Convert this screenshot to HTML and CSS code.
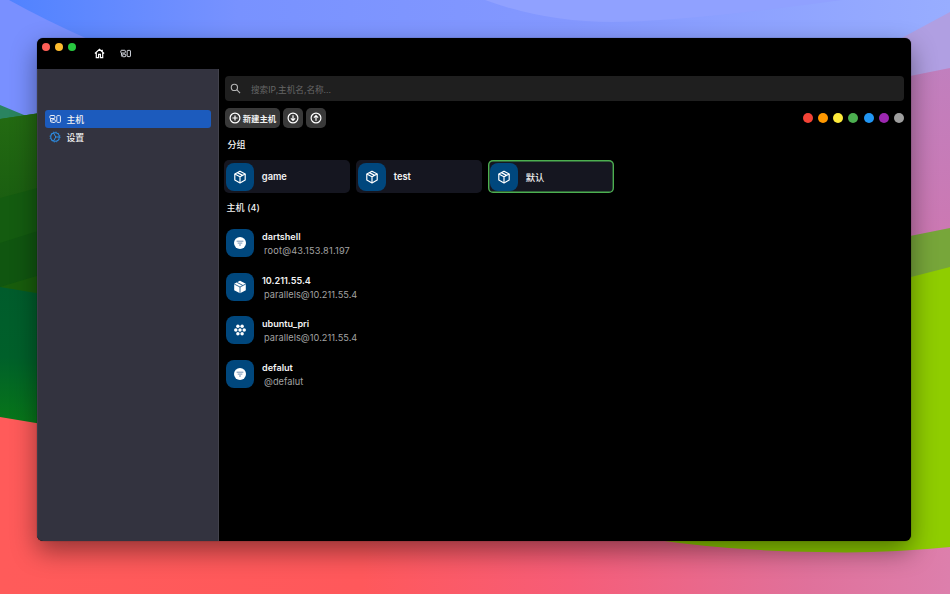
FILE: index.html
```
<!DOCTYPE html>
<html lang="zh-CN">

<head>
    <meta charset="UTF-8">
    <meta name="viewport" content="width=device-width, initial-scale=1.0">
    <title>主机</title>
    <link rel="stylesheet" href="styles.css">
</head>

<body>
    <!-- 壁纸 -->
    <svg class="wallpaper" viewBox="0 0 950 594" preserveAspectRatio="none">
        <defs>
            <linearGradient id="sky">
                <stop offset="0" stop-color="#4f82ff" />
                <stop offset=".25" stop-color="#7892ff" />
                <stop offset=".6" stop-color="#8498ff" />
                <stop offset="1" stop-color="#98adff" />
            </linearGradient>
            <linearGradient id="ground">
                <stop offset="0" stop-color="#ff5b5a" />
                <stop offset=".38" stop-color="#ff585b" />
                <stop offset=".6" stop-color="#f65d78" />
                <stop offset=".85" stop-color="#e0719b" />
                <stop offset="1" stop-color="#dd7fac" />
            </linearGradient>
            <linearGradient id="forest" x2="0" y2="1">
                <stop offset="0" stop-color="#005c2c" />
                <stop offset=".5" stop-color="#00602a" />
                <stop offset="1" stop-color="#087818" />
            </linearGradient>
            <linearGradient id="hill" x2="0" y2="1">
                <stop offset="0" stop-color="#246b12" />
                <stop offset="1" stop-color="#10510f" />
            </linearGradient>
            <linearGradient id="pink" x2="0" y2="1">
                <stop offset="0" stop-color="#c17fbe" />
                <stop offset="1" stop-color="#cc78b2" />
            </linearGradient>
        </defs>
        <rect width="950" height="594" fill="url(#sky)" />
        <path d="M0 0H9Q45 20 90 40V130H0z" fill="#7990ff" />
        <path d="M485 0Q545 22 612 22Q680 22 842 0z" fill="#90a1ff" />
        <path d="M950 12L898 40V90H950z" fill="#b09fe2" />
        <path d="M900 78L950 68V240H900z" fill="url(#pink)" />
        <path d="M0 400H950V594H0z" fill="url(#ground)" />
        <path d="M0 105L24 115L60 130H0z" fill="#2a8460" />
        <path d="M0 119L60 110V200H0z" fill="#23690f" />
        <path d="M0 119L60 110V300H0z" fill="url(#hill)" />
        <path d="M0 198L60 182V300H0z" fill="#145c10" />
        <path d="M0 243L60 224V300H0z" fill="#105610" />
        <path d="M0 287L60 269V310H0z" fill="#185d0c" />
        <path d="M0 287L60 297V427L0 417z" fill="url(#forest)" />
        <path d="M900 238L950 228V290H900z" fill="#77a63a" />
        <path d="M880 285L950 267V547Q880 554 818 552Q730 551 650 539z" fill="#8fcd00" />
    </svg>

    <div class="window">
        <div class="titlebar">
            <div class="lights">
                <span class="light close"></span>
                <span class="light min"></span>
                <span class="light max"></span>
            </div>
            <svg class="tab-icon" viewBox="0 0 24 24" fill="none" stroke="#fff" stroke-width="2.6">
                <path d="M2 12L12 3L22 12M5 10V21H10V14H14V21H19V10M18 8V4" />
            </svg>
            <svg class="tab-icon" viewBox="0 0 12 12">
                <use href="#devices" />
            </svg>
        </div>

        <div class="main">
            <div class="sidebar">
                <div class="menu active">
                    <svg class="menu-icon" viewBox="0 0 12 12">
                        <g id="devices" fill="none" stroke="#e8ecf5" stroke-width="1">
                            <rect x=".9" y="2.5" width="4.9" height="3" rx=".8" />
                            <path d="M1.6 5.5V8.2Q1.6 9.4 2.6 9.4" />
                            <rect x="2.9" y="6.7" width="3.4" height="2.8" rx=".8" />
                            <rect x="7.8" y="2.6" width="3.6" height="6.8" rx=".7" />
                        </g>
                    </svg>
                    <span>主机</span>
                </div>
                <div class="menu">
                    <svg class="menu-icon" viewBox="0 0 12 12" fill="none" stroke="#2d8ee6">
                        <circle cx="6" cy="6" r="4.3" stroke-width="1.1" />
                        <circle cx="6" cy="6" r="5" stroke-dasharray="1.1 1.52" stroke-width=".9" />
                        <path d="M4.5 2L6.8 6L4.5 10M6.8 6H10.3" />
                    </svg>
                    <span>设置</span>
                </div>
            </div>

            <div class="content">
                <div class="search">
                    <svg class="search-icon" viewBox="0 0 12 12" fill="none" stroke="#b5b5b5" stroke-width="1.2">
                        <circle cx="4.8" cy="4.8" r="3.4" />
                        <path d="M7.3 7.3L11 11" />
                    </svg>
                    <span>搜索IP,主机名,名称...</span>
                </div>

                <div class="toolbar">
                    <div class="btn btn-new">
                        <svg class="btn-icon" viewBox="0 0 12 12">
                            <circle cx="6" cy="6" r="4.9" />
                            <path d="M6 3.4V8.6M3.4 6H8.6" />
                        </svg>
                        <span>新建主机</span>
                    </div>
                    <div class="btn">
                        <svg class="btn-icon" viewBox="0 0 12 12">
                            <circle cx="6" cy="6" r="4.9" />
                            <path d="M6 3.3V8.3M3.9 6.3L6 8.4L8.1 6.3" />
                        </svg>
                    </div>
                    <div class="btn">
                        <svg class="btn-icon" viewBox="0 0 12 12">
                            <circle cx="6" cy="6" r="4.9" />
                            <path d="M6 8.7V3.7M3.9 5.7L6 3.6L8.1 5.7" />
                        </svg>
                    </div>
                    <div class="colors">
                        <span class="dot red"></span>
                        <span class="dot orange"></span>
                        <span class="dot yellow"></span>
                        <span class="dot green"></span>
                        <span class="dot blue"></span>
                        <span class="dot purple"></span>
                        <span class="dot grey"></span>
                    </div>
                </div>

                <div class="title">分组</div>
                <div class="groups">
                    <div class="group">
                        <div class="tile">
                            <svg class="tile-icon" viewBox="0 0 14 14">
                                <g id="box" fill="none" stroke="#fff" stroke-width="1.2" stroke-linejoin="round">
                                    <path d="M7 1.2L12.2 4V10L7 12.9L1.8 10V4z" />
                                    <path d="M1.8 4L7 6.8L12.2 4M7 6.8V12.9M4.4 2.6L9.6 5.4" />
                                </g>
                            </svg>
                        </div>
                        <span>game</span>
                    </div>
                    <div class="group">
                        <div class="tile">
                            <svg class="tile-icon" viewBox="0 0 14 14">
                                <use href="#box" />
                            </svg>
                        </div>
                        <span>test</span>
                    </div>
                    <div class="group selected">
                        <div class="tile">
                            <svg class="tile-icon" viewBox="0 0 14 14">
                                <use href="#box" />
                            </svg>
                        </div>
                        <span class="cn">默认</span>
                    </div>
                </div>

                <div class="title hosts-title">主机 (4)</div>
                <div class="hosts">
                    <div class="host">
                        <div class="tile">
                            <svg class="tile-icon" viewBox="0 0 14 14">
                                <g id="filter">
                                    <circle cx="7" cy="7" r="6" fill="#fff" />
                                    <path d="M3.6 5.2H10.4M4.7 7.1H9.3M6 9H8" stroke="#6487ab" stroke-width=".9" />
                                </g>
                            </svg>
                        </div>
                        <div>
                            <div class="name">dartshell</div>
                            <div class="addr root">root@43.153.81.197</div>
                        </div>
                    </div>
                    <div class="host">
                        <div class="tile">
                            <svg class="tile-icon" viewBox="0 0 14 14">
                                <path d="M7 .8L12.8 3.8V10.2L7 13.3L1.2 10.2V3.8z" fill="#fff" />
                                <path d="M1.2 4L7 7L12.8 4M7 7V13.3M4 2.4L9.8 5.4" fill="none" stroke="#00477d" stroke-width=".8" />
                            </svg>
                        </div>
                        <div>
                            <div class="name">10.211.55.4</div>
                            <div class="addr">parallels@10.211.55.4</div>
                        </div>
                    </div>
                    <div class="host">
                        <div class="tile">
                            <svg class="tile-icon" viewBox="0 0 14 14" fill="#fff">
                                <circle cx="7" cy="7" r="1.75" />
                                <circle cx="2.8" cy="7" r="1.75" />
                                <circle cx="11.2" cy="7" r="1.75" />
                                <circle cx="4.9" cy="3.3" r="1.75" />
                                <circle cx="9.1" cy="3.3" r="1.75" />
                                <circle cx="4.9" cy="10.7" r="1.75" />
                                <circle cx="9.1" cy="10.7" r="1.75" />
                            </svg>
                        </div>
                        <div>
                            <div class="name">ubuntu_pri</div>
                            <div class="addr">parallels@10.211.55.4</div>
                        </div>
                    </div>
                    <div class="host">
                        <div class="tile">
                            <svg class="tile-icon" viewBox="0 0 14 14">
                                <use href="#filter" />
                            </svg>
                        </div>
                        <div>
                            <div class="name">defalut</div>
                            <div class="addr">@defalut</div>
                        </div>
                    </div>
                </div>
            </div>
        </div>
    </div>
</body>

</html>
```
FILE: styles.css
```
* {
    box-sizing: border-box;
}

body {
    margin: 0;
    height: 594px;
    overflow: hidden;
    padding: 38px 39px 53px 37px;
    font-family: Inter, "Noto Sans CJK SC", sans-serif;
    font-size: 9px;
    color: #f2f2f2;
}

svg {
    display: block;
    flex: none;
}

.wallpaper {
    position: absolute;
    left: 0;
    top: 0;
    width: 950px;
    height: 594px;
    z-index: -1;
}

.window {
    height: 503px;
    display: flex;
    flex-direction: column;
    border-radius: 6px;
    overflow: hidden;
    background-color: #000;
    box-shadow: 0 0 1px rgba(0, 0, 0, 0.7), 0 10px 26px rgba(0, 0, 0, 0.42);
}

.titlebar {
    height: 31px;
    display: flex;
    padding-left: 5.3px;
}

.lights {
    display: flex;
    gap: 5px;
    padding-top: 4.5px;
    margin-right: 18px;
}

.light {
    width: 8px;
    height: 8px;
    border-radius: 50%;
}

.close {
    background-color: #ff5f57;
}

.min {
    background-color: #febc2e;
}

.max {
    background-color: #28c840;
}

.tab-icon {
    width: 11px;
    height: 11px;
    margin: 10px 15px 0 0;
}

.main {
    flex: 1;
    display: flex;
}

.sidebar {
    width: 181.5px;
    padding: 41.4px 8px 0;
    background-color: #33333f;
    border-left: 1px solid #3c3c48;
    border-right: 1px solid #42424c;
}

.menu {
    height: 18px;
    display: flex;
    align-items: center;
    gap: 5px;
    padding-left: 4.4px;
    border-radius: 3px;
    font-weight: 500;
    font-size: 8.8px;
    margin-right: -1px;
    margin-left: -1px;
}

.menu.active {
    background-color: #1c5bbd;
}

.menu-icon {
    width: 12px;
    height: 12px;
}

.content {
    flex: 1;
    padding: 7px 7.5px 0 6.5px;
}

.search {
    height: 25px;
    display: flex;
    align-items: center;
    gap: 10px;
    padding-left: 5px;
    border-radius: 4px;
    background-color: #1f1f1f;
    color: #666;
    font-size: 8.6px;
}

.search-icon {
    width: 11px;
    height: 11px;
}

.toolbar {
    display: flex;
    align-items: center;
    gap: 3.2px;
    margin: 7px -0.4px 0 0;
}

.btn {
    width: 20px;
    height: 20px;
    display: flex;
    align-items: center;
    justify-content: center;
    border-radius: 5px;
    background-color: #393939;
}

.btn-new {
    width: 55px;
    gap: 2px;
    font-size: 8.4px;
    font-weight: 700;
    white-space: nowrap;
}

.btn-icon {
    width: 12px;
    height: 12px;
    fill: none;
    stroke: #fff;
    stroke-width: 1.2;
}

.colors {
    display: flex;
    gap: 5.2px;
    margin-left: auto;
}

.dot {
    width: 10px;
    height: 10px;
    border-radius: 50%;
}

.red {
    background-color: #f44336;
}

.orange {
    background-color: #ff9800;
}

.yellow {
    background-color: #ffeb3b;
}

.green {
    background-color: #4caf50;
}

.blue {
    background-color: #2196f3;
}

.purple {
    background-color: #9c27b0;
}

.grey {
    background-color: #9e9e9e;
}

.title {
    margin: 10px 0 0 2.5px;
    line-height: 14px;
    font-weight: 500;
}

.groups {
    display: flex;
    gap: 6px;
    margin: 8px 0 0 -1.2px;
}

.group {
    width: 126px;
    height: 33px;
    display: flex;
    align-items: center;
    gap: 8px;
    padding-left: 2px;
    border-radius: 5px;
    background-color: #151620;
    font-weight: 600;
    font-size: 9.3px;
}

.group.selected {
    box-shadow: inset 0 0 0 1.4px #4caf50;
}

.group .cn {
    font-weight: 500;
}

.tile {
    width: 28px;
    height: 28px;
    display: flex;
    align-items: center;
    justify-content: center;
    border-radius: 8px;
    background-color: #00477d;
}

.tile-icon {
    width: 14px;
    height: 14px;
}

.hosts-title {
    margin: 8px 0 0 1.5px;
    letter-spacing: 0.1px;
}

.hosts {
    margin: 14.4px 0 0 1px;
}

.host {
    height: 28px;
    display: flex;
    gap: 8px;
    margin-bottom: 15.5px;
}

.name {
    margin-top: 1px;
    line-height: 14px;
    font-size: 9.1px;
    font-weight: 600;
}

.addr {
    margin-left: 2px;
    line-height: 14px;
    font-size: 9.2px;
    letter-spacing: 0.05px;
    color: #a3a3a3;
}

.addr.root {
    letter-spacing: 0.2px;
}
```
